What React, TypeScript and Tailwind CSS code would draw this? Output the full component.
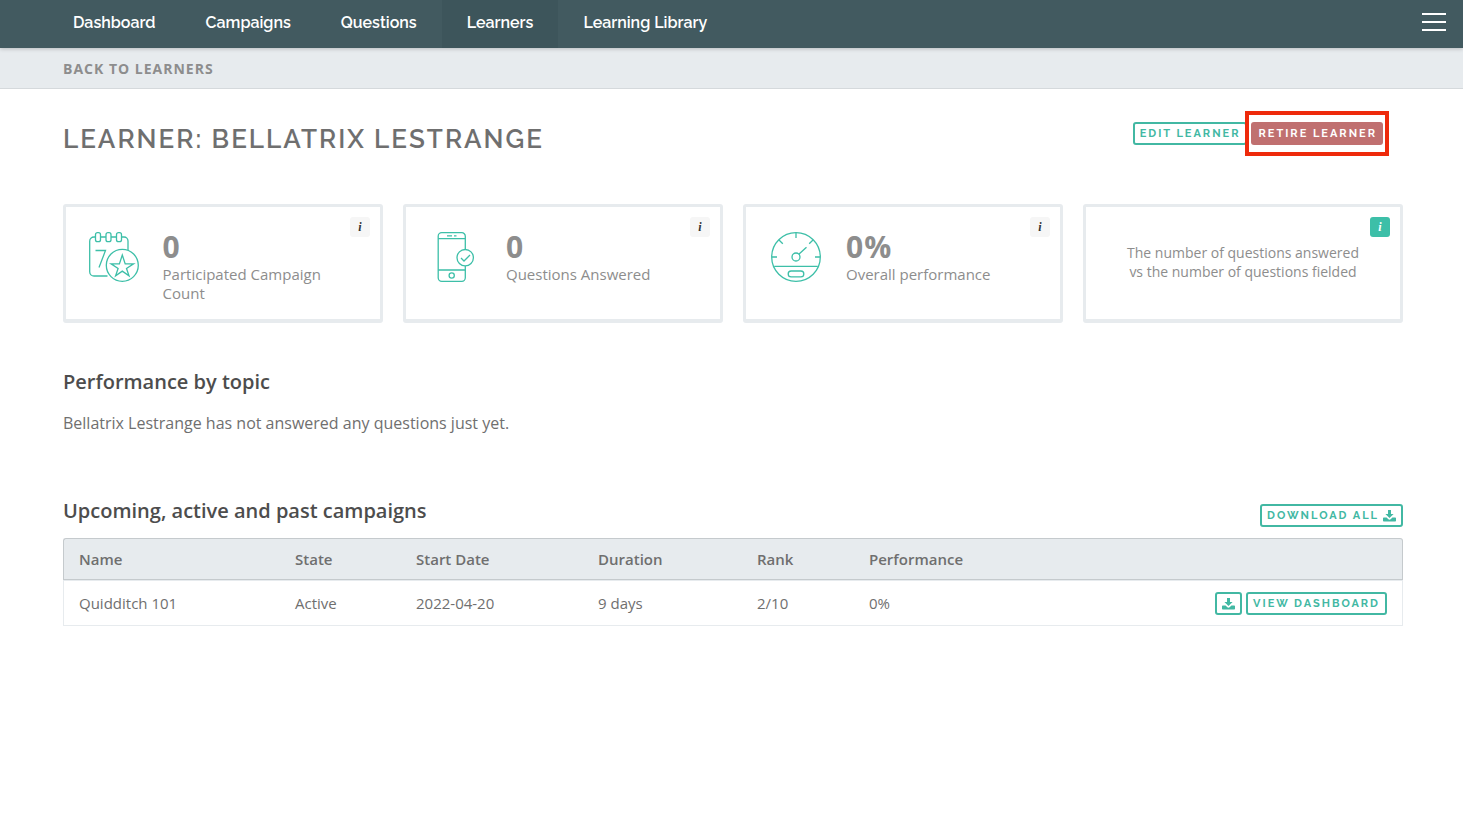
import type { ReactNode } from "react";
import clsx from "clsx";

const navItems = [
  { label: "Dashboard", href: "#dashboard" },
  { label: "Campaigns", href: "#campaigns" },
  { label: "Questions", href: "#questions" },
  { label: "Learners", href: "#learners", active: true },
  { label: "Learning Library", href: "#library" },
];

const campaigns = [
  {
    name: "Quidditch 101",
    state: "Active",
    startDate: "2022-04-20",
    duration: "9 days",
    rank: "2/10",
    performance: "0%",
  },
];

const headingFont = "font-['Raleway','Lato',sans-serif]";

const outlineButton =
  "flex h-[23px] items-center gap-1 whitespace-nowrap rounded-[3px] border-2 border-[#42b8a3] px-[5px] pt-px font-['Raleway','Lato',sans-serif] text-[11px] font-bold uppercase tracking-[2px] text-[#42b8a3]";

function DownloadIcon() {
  return (
    <svg width="13" height="12" viewBox="0 0 13 12" fill="currentColor" aria-hidden="true">
      <path d="M5 0h3v4h2.600L6.500 8.100 2.400 4H5z" />
      <path d="M0.800 7.500h2.800l1.500 1.500a2 2 0 0 0 2.800 0l1.500-1.500h2.800a.8.8 0 0 1 .8.8v2.400a.8.8 0 0 1-.8.8H0.800a.8.8 0 0 1-.8-.8V8.300a.8.8 0 0 1 .8-.8z" />
    </svg>
  );
}

function CalendarIcon() {
  return (
    <svg width="50" height="50" viewBox="0 0 50 50" fill="none" stroke="#3dbfa8" strokeWidth="1.3" aria-hidden="true">
      <path d="M18.500 44H5a4.300 4.300 0 0 1-4.300-4.300V9.300A4.300 4.300 0 0 1 5 5h1.500M11.500 5h5.500M22 5h5.500M32.500 5h2.500a4 4 0 0 1 4 4v9" />
      <rect x="6.500" y="0.700" width="5" height="9" rx="2" />
      <rect x="17" y="0.700" width="5" height="9" rx="2" />
      <rect x="27.500" y="0.700" width="5" height="9" rx="2" />
      <path d="M6.500 18.500h10L10 35.500" />
      <circle cx="33.300" cy="33.300" r="16" />
      <path d="M33.300 23l2.900 8.900h8.300l-7 4.500 2.500 7.400-6.700-4.700-6.700 4.700 2.500-7.400-7-4.500h8.300z" />
    </svg>
  );
}

function PhoneIcon() {
  return (
    <svg width="50" height="50" viewBox="0 0 50 50" fill="none" stroke="#3dbfa8" strokeWidth="1.300" aria-hidden="true">
      <path d="M34.300 17.500V4.200a3.500 3.500 0 0 0-3.500-3.500H10.700a3.500 3.500 0 0 0-3.500 3.500v41.600a3.500 3.500 0 0 0 3.500 3.500h20.100a3.500 3.500 0 0 0 3.500-3.500V34" />
      <path d="M7.200 6.700h27.100M7.200 38h27.100M16 3.900h5M23 3.900h2.500" />
      <circle cx="20.700" cy="43.500" r="2.600" />
      <circle cx="34.200" cy="25.700" r="8.200" />
      <path d="M30 26l3 3 6-6" />
    </svg>
  );
}

function GaugeIcon() {
  return (
    <svg width="50" height="50" viewBox="0 0 50 50" fill="none" stroke="#3dbfa8" strokeWidth="1.300" aria-hidden="true">
      <circle cx="25" cy="25" r="24.300" />
      <path d="M25 1v5M1 25h5M44 25h5M8 8l3.800 3.800M42 8l-3.800 3.800M27.800 22.200L35.500 15.300M3.200 34.300h43.600" />
      <circle cx="25" cy="25" r="4" />
      <rect x="17.200" y="39" width="15.600" height="5.800" rx="2.900" />
    </svg>
  );
}

function InfoButton({ active = false }: { active?: boolean }) {
  return (
    <button
      type="button"
      aria-label="More information"
      className={clsx(
        "absolute right-[10px] top-[10px] flex size-5 items-center justify-center rounded-[3px] pb-px font-['Liberation_Serif',serif] text-[12px] font-bold italic leading-none",
        active ? "bg-[#3dbfa8] text-white" : "bg-[#f6f6f6] text-[#333]"
      )}
    >
      i
    </button>
  );
}

function Card({ children, active }: { children: ReactNode; active?: boolean }) {
  return (
    <div className="relative min-h-[119px] rounded-[3px] border-[3px] border-b-4 border-[#e7ebee] text-[#8d8d8d]">
      <InfoButton active={active} />
      {children}
    </div>
  );
}

function StatCard({ icon, value, label }: { icon: ReactNode; value: string; label: string }) {
  return (
    <Card>
      <div className="flex pr-5 pt-[22px]">
        <div className="flex w-[100px] justify-center pt-[3px]">{icon}</div>
        <div>
          <p className="text-[30px] font-bold leading-9 tracking-[1px]">{value}</p>
          <p className="text-[15px] leading-[19px]">{label}</p>
        </div>
      </div>
    </Card>
  );
}

export default function App() {
  return (
    <div className="min-h-screen bg-white font-['Open_Sans',sans-serif] text-[#6f6f6f]">
      <header className="relative flex h-12 items-center justify-between bg-[#425a60] pl-12 pr-[17px] shadow-[0_1px_4px_rgba(0,0,0,0.2)]">
        <nav className={clsx("flex h-full text-[16px] font-semibold text-white", headingFont)}>
          {navItems.map((item) => (
            <a
              key={item.label}
              href={item.href}
              className={clsx("flex items-center px-[25px] pb-[3px]", item.active && "bg-[#3d555b]")}
            >
              {item.label}
            </a>
          ))}
        </nav>
        <button type="button" aria-label="Open menu" className="flex flex-col gap-[6px] pb-1">
          <span className="h-[2px] w-6 bg-white" />
          <span className="h-[2px] w-6 bg-white" />
          <span className="h-[2px] w-6 bg-white" />
        </button>
      </header>

      <div className="flex h-[41px] items-center border-b border-[#d5d9dc] bg-[#e7ebee] pl-[63px]">
        <a href="#learners" className="text-[14px] font-bold uppercase tracking-[1px] text-[#8d8d8d]">
          Back to learners
        </a>
      </div>

      <main className="pb-10 pl-[63px] pr-[60px]">
        <div className="flex items-start justify-between pt-[33px]">
          <h1 className={clsx("text-[26px] font-semibold uppercase leading-[34px] tracking-[2px]", headingFont)}>
            Learner: Bellatrix Lestrange
          </h1>
          <div className="flex gap-1 pr-5">
            <button type="button" className={outlineButton}>
              Edit learner
            </button>
            <div className="relative">
              <button
                type="button"
                className={clsx(
                  "flex h-[23px] items-center whitespace-nowrap rounded-[3px] bg-[#c07070] pl-[7px] pr-[6px] pt-px text-[11px] font-bold uppercase tracking-[2px] text-white",
                  headingFont
                )}
              >
                Retire learner
              </button>
              <div className="pointer-events-none absolute -inset-x-[6px] -inset-y-[11px] border-4 border-[#ee2a0b]" />
            </div>
          </div>
        </div>

        <section className="mt-12 grid grid-cols-4 gap-5">
          <StatCard icon={<CalendarIcon />} value="0" label="Participated Campaign Count" />
          <StatCard icon={<PhoneIcon />} value="0" label="Questions Answered" />
          <StatCard icon={<GaugeIcon />} value="0%" label="Overall performance" />
          <Card active>
            <p className="px-9 pt-9 text-center text-[14px] leading-[19px]">
              The number of questions answered vs the number of questions fielded
            </p>
          </Card>
        </section>

        <section className="mt-[45px]">
          <h2 className="text-[20px] font-semibold leading-7 text-[#4d4d4d]">Performance by topic</h2>
          <p className="mt-[15px] text-[16px] leading-6">
            Bellatrix Lestrange has not answered any questions just yet.
          </p>
        </section>

        <section className="mt-[62px]">
          <div className="flex items-end justify-between pb-[11px]">
            <h2 className="pb-[2px] text-[20px] font-semibold leading-7 text-[#4d4d4d]">
              Upcoming, active and past campaigns
            </h2>
            <button type="button" className={outlineButton}>
              Download all
              <DownloadIcon />
            </button>
          </div>

          <table className="w-full table-fixed border-separate border-spacing-0 text-left text-[15px]">
            <thead>
              <tr className="h-[42px] *:border-y *:border-[#c5cacd] *:bg-[#e7ebee] *:font-semibold">
                <th className="w-[232px] rounded-tl-[3px] border-l pl-[15px]">Name</th>
                <th className="w-[121px]">State</th>
                <th className="w-[182px]">Start Date</th>
                <th className="w-[159px]">Duration</th>
                <th className="w-[112px]">Rank</th>
                <th>Performance</th>
                <th className="rounded-tr-[3px] border-r" aria-label="Actions" />
              </tr>
            </thead>
            <tbody>
              {campaigns.map((campaign) => (
                <tr key={campaign.name} className="h-[46px] *:border-y *:border-[#e7ebee] *:pt-px">
                  <td className="border-l pl-[15px]">{campaign.name}</td>
                  <td>{campaign.state}</td>
                  <td>{campaign.startDate}</td>
                  <td>{campaign.duration}</td>
                  <td>{campaign.rank}</td>
                  <td>{campaign.performance}</td>
                  <td className="border-r pr-[15px]">
                    <div className="flex justify-end gap-1">
                      <button type="button" aria-label="Download" className={outlineButton}>
                        <DownloadIcon />
                      </button>
                      <button type="button" className={outlineButton}>
                        View dashboard
                      </button>
                    </div>
                  </td>
                </tr>
              ))}
            </tbody>
          </table>
        </section>
      </main>
    </div>
  );
}
